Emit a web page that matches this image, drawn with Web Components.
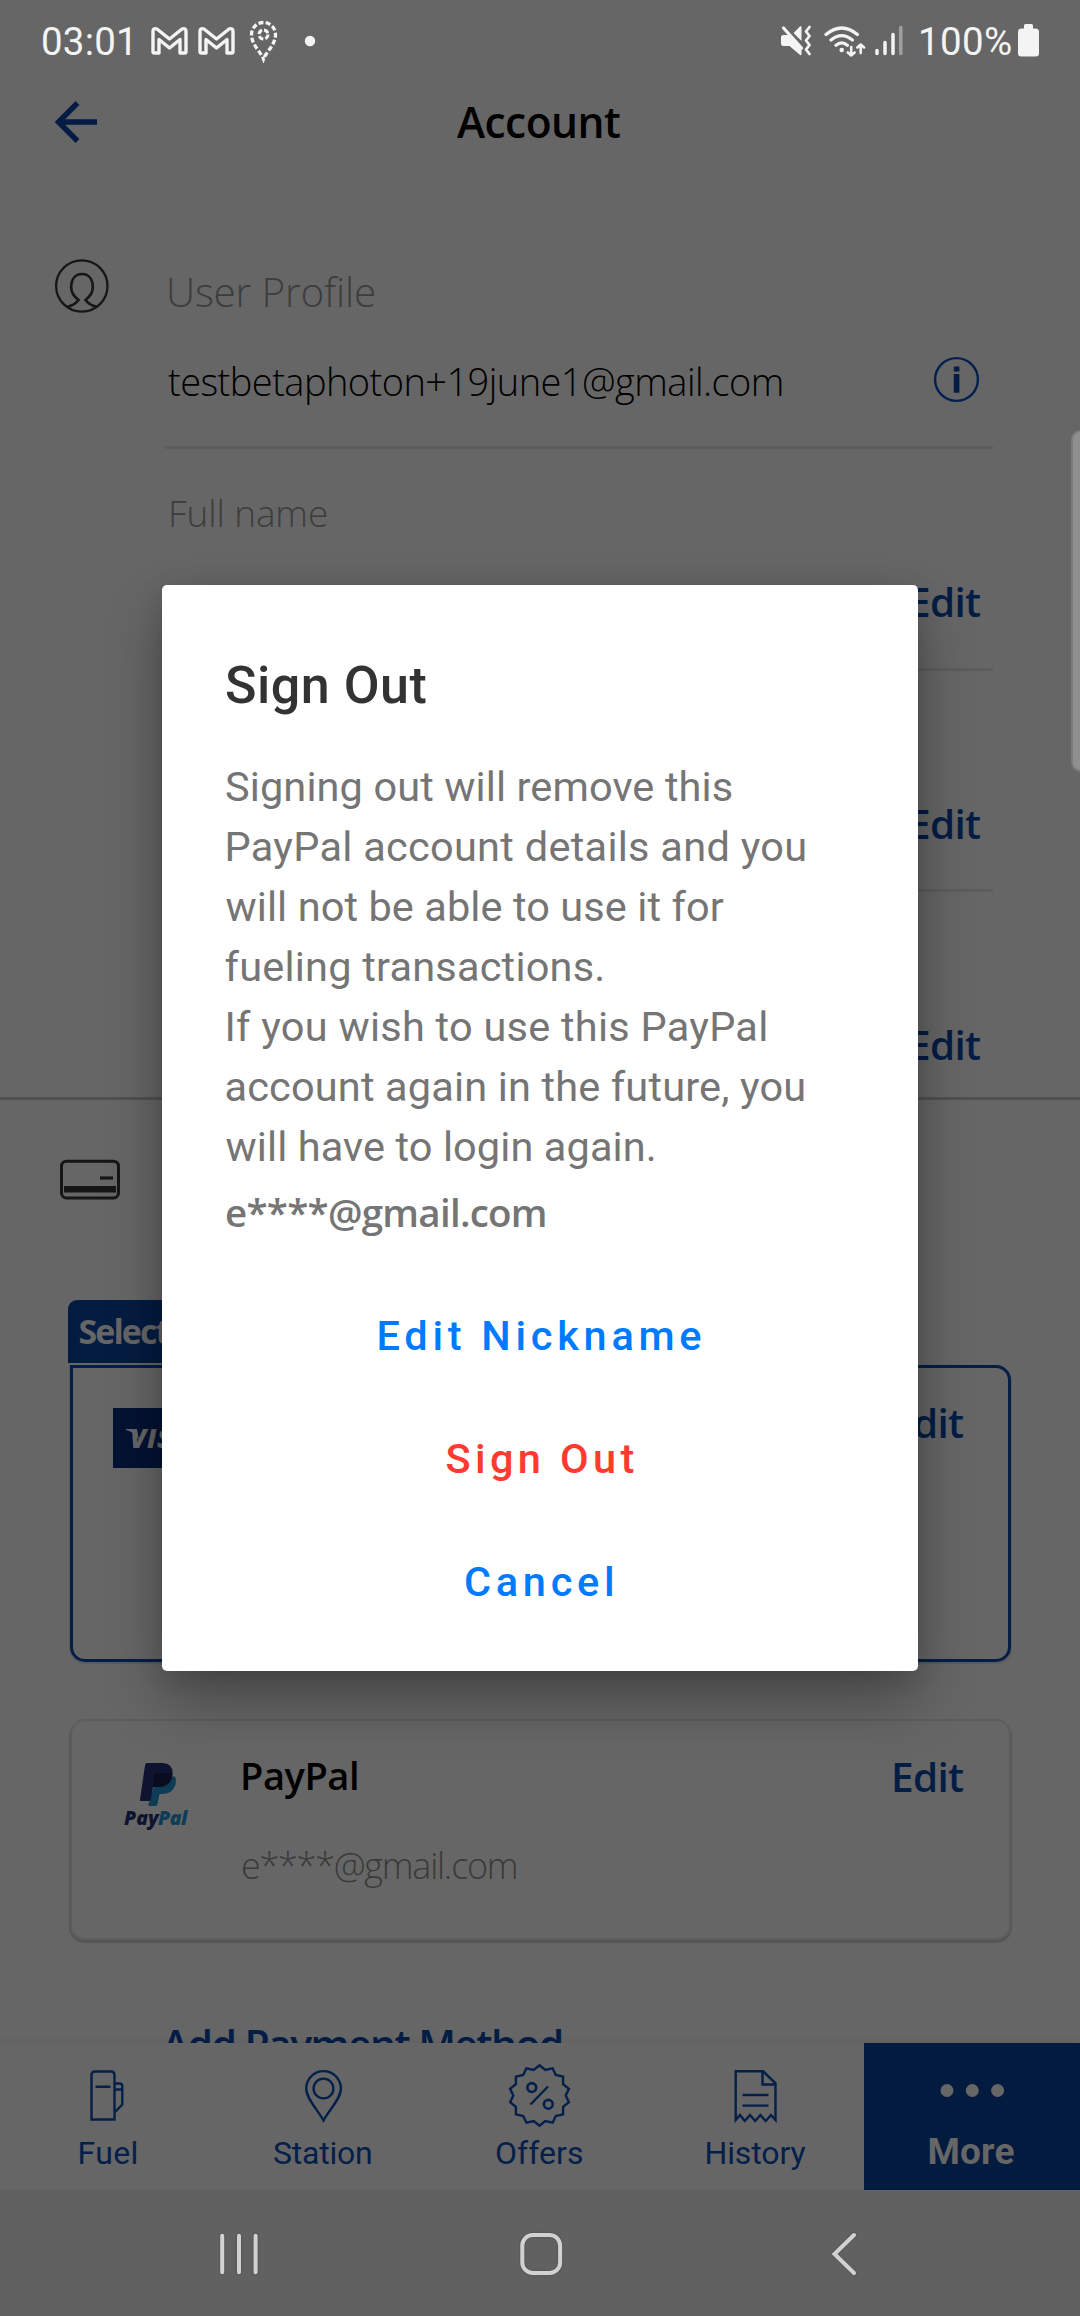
<!DOCTYPE html>
<html lang="en">
<head>
<meta charset="utf-8">
<title>Account</title>
<style>
html,body{margin:0;padding:0;background:#666}
body{width:1080px;height:2316px;overflow:hidden;font-family:Roboto,sans-serif}
</style>
</head>
<body>
<account-screen></account-screen>
<script>
const FACES = { brand: '"Open Sans","Noto Sans",sans-serif', system: 'Roboto,sans-serif' };
const measure = document.createElement('canvas').getContext('2d');

/* A single line of text whose visible glyphs span exactly `ink` pixels. */
class TextRun extends HTMLElement {
  constructor() {
    super();
    this.attachShadow({ mode: 'open' }).innerHTML =
      '<style>:host{display:block;white-space:pre;flex:none;line-height:1.3}span{display:block}</style><span><slot></slot></span>';
  }
  connectedCallback() {
    const face = FACES[this.getAttribute('face') || 'brand'];
    const size = +this.getAttribute('size'), weight = this.getAttribute('weight') || 400;
    const style = this.getAttribute('slant') || 'normal';
    const text = this.textContent;
    Object.assign(this.style, { fontFamily: face, fontSize: size + 'px', fontWeight: weight, fontStyle: style, fontVariantLigatures: 'none' });
    if (this.hasAttribute('color')) this.style.color = this.getAttribute('color');
    const ink = +this.getAttribute('ink');
    if (!ink) return;
    measure.font = `${style} ${weight} ${size}px ${face}`;
    measure.letterSpacing = '0.01px';
    const m = measure.measureText(text);
    const natural = m.actualBoundingBoxLeft + m.actualBoundingBoxRight;
    const gap = (ink - natural) / Math.max(1, text.length - 1);
    this.style.width = ink + 'px';
    this.style.letterSpacing = gap.toFixed(3) + 'px';
    this.shadowRoot.querySelector('span').style.marginLeft = m.actualBoundingBoxLeft.toFixed(2) + 'px';
  }
}
customElements.define('text-run', TextRun);

const badge = (() => {
  const pts = [];
  for (let i = 0; i < 28; i++) {
    const r = i % 2 ? 26.2 : 30.2, a = Math.PI * i / 14 - Math.PI / 2;
    pts.push((539.5 + r * Math.cos(a)).toFixed(1) + ',' + (2095.5 + r * Math.sin(a)).toFixed(1));
  }
  return pts.join(' ');
})();
const GMAIL = '<path d="M154.5 53h4.500V39.500l10.500 8.500 10.500-8.500V53h4.500q1.500 0 1.500-1.500V31.500q0-4-4-2.500l-12.500 10-12.500-10q-4-1.500-4 2.500V51.500q0 1.500 1.500 1.500z" fill="none" stroke="#f4f4f4" stroke-width="3.400" stroke-linejoin="round"/>';
/* name: [viewBox, markup] */
const ICONS = {
  gmail: ['151 22 37 38', GMAIL],
  trip: ['248 20 31 44', '<g fill="none" stroke="#f4f4f4"><path d="M263.500 60C261 53 251.500 46 251.500 35.500A12 12 0 0 1 275.500 35.500C275.500 46 266 53 263.500 60z" stroke-width="3.300" stroke-dasharray="5 2.300" stroke-dashoffset="2.500"/><circle cx="263.500" cy="35.500" r="4.500" stroke-width="3" stroke-dasharray="5 2.070"/></g>'],
  more1: ['304 35 12 12', '<circle cx="310" cy="41" r="5.200" fill="#f4f4f4"/>'],
  mute: ['780 24 32 36', '<g fill="#f4f4f4"><path d="M783 36h5l13.500 13V55.500q-.5 1.500-2 0L789.500 47H783q-2-.5-2-2v-7q0-1.500 2-2z"/><path d="M793.500 34l6.500-6.500q1.500-1 1.500.5V42z"/></g><path d="M786 28.500l18.500 20" stroke="#666" stroke-width="2.500"/><path d="M783.500 29l18 20" stroke="#f4f4f4" stroke-width="3.200" stroke-linecap="round"/><path d="M809.500 28l-3.500 4.500 3.500 4.500-3.500 4.500 3.500 4.500-3.500 4.500 3.500 4.500" fill="none" stroke="#f4f4f4" stroke-width="2.800" stroke-linecap="round" stroke-linejoin="round"/>'],
  wifi: ['822 22 45 38', '<g fill="none" stroke="#f4f4f4" stroke-width="3.200" stroke-linecap="round" stroke-linejoin="round"><path d="M826 34.500q15.700-13 31.400 0M831 40q10.700-8.600 21.400 0M836 45.200q5.700-4.600 11.400 0"/><path d="M851.200 47v8.500M847.800 52.500l3.400 3 3.400-3M860.700 53v-8.500M857.300 47.500l3.400-3 3.400 3" stroke-width="2.600"/></g><circle cx="841.700" cy="50" r="2.300" fill="#f4f4f4"/>'],
  signal: ['874 24 30 36', '<g stroke="#f4f4f4" stroke-width="3.500" stroke-linecap="round"><path d="M877 51.500v3M885 43.500v11M893 35.500v19"/><path d="M900.800 28.500v26" stroke="#a0a0a0"/></g>'],
  battery: ['1017 24 23 36', '<path d="M1024 26.500q0-1.500 1.500-1.500h6q1.500 0 1.500 1.500V29.500h2.500q3.500 0 3.500 3.500V54.500q0 3-3.500 3h-14q-3.500 0-3.500-3V33q0-3.500 3.500-3.500h2.500z" fill="#f4f4f4"/>'],
  back: ['54 98 46 48', '<path d="M97 122H60M77.500 103L58.500 122l19 19" fill="none" stroke="#041c43" stroke-width="5.400"/>'],
  user: ['54 258 56 56', '<g fill="none" stroke="#161616" stroke-width="2.300"><circle cx="81.800" cy="286" r="25.700"/><path d="M67 307q8-2 11.500-7C74 296.500 71.200 292 71.200 287.500 71.200 279.500 75 274 82 274S92.800 279.500 92.800 287.500C92.800 292 90 296.500 85.500 300q3.500 5 11.500 7" stroke-width="2.700"/></g>'],
  info: ['933 356 48 48', '<circle cx="956.500" cy="379.500" r="21.400" fill="none" stroke="#04204f" stroke-width="2.400"/><path d="M953.800 366.500h5.600v5h-5.600zM953.800 374h5.600v18.700h-5.600z" fill="#041d47"/>'],
  card: ['58 1158 64 43', '<rect x="61.500" y="1161.200" width="57" height="36.800" rx="5" fill="none" stroke="#161616" stroke-width="3"/><path d="M64 1189.300h52" stroke="#161616" stroke-width="6.500"/><path d="M100 1178h13" stroke="#161616" stroke-width="3.200"/>'],
  pp: ['138 1761 40 47', '<path d="M157 1776.500h18q1.500 3 .5 8-3 9.500-13.500 9.500h-2.500l-2 10q-.3 2-2.200 2h-5.800q-1.200 0-1-1.500z" fill="#0e3c56"/><path d="M146.500 1763h16q11 .5 10 11.500-2 12.500-14 12.500h-5.500l-2 12q-.5 2-2 2h-8q-1.200 0-1-1.500l5-34q.3-2.500 1.500-2.500z" fill="#0e1430"/><path d="M154.500 1773h17.800q.3 13-13.300 14h-6.500z" fill="#0a0d20"/>'],
  fuel: ['89 2064 38 62', '<g fill="none" stroke="#04204a" stroke-width="2.400"><path d="M91.500 2118.500V2074q0-3.500 3.500-3.500h16q3.500 0 3.500 3.500v44.500zM95.500 2085.700h15M115 2082.500h4.500q2.800 0 2.800 3v18l-7.300 7.500M115 2088.500h7"/></g>'],
  pin: ['302 2064 44 62', '<g fill="none" stroke="#04204a" stroke-width="2.400"><path d="M323.500 2119.500C318 2109 306.200 2098 306.200 2087.500A17.300 17.300 0 0 1 340.900 2087.500C340.900 2098 329 2109 323.500 2119.500z"/><circle cx="323.500" cy="2087.500" r="9.900"/></g>'],
  offers: ['506 2062 68 67', `<g fill="none" stroke="#04204a" stroke-width="2.400"><polygon points="${badge}"/><path d="M530.500 2104.500l17.500-18"/><circle cx="531.800" cy="2087.500" r="4.400" stroke-width="2.600"/><circle cx="548.300" cy="2104.300" r="4.400" stroke-width="2.600"/></g>`],
  history: ['732 2064 48 62', '<g fill="none" stroke="#04204a" stroke-width="2.400"><path d="M735.700 2119V2070.300h27.500l12.300 12V2119l-4.500-5-5.300 6-5.300-6-5.200 6-5.200-6-5.200 6-4.800-6z"/><path d="M762.500 2070.500v13h12.500M742.500 2094h26M742.500 2104.600h26"/></g>'],
  dots: ['938 2082 66 17', '<g fill="#666"><circle cx="946" cy="2090.500" r="6.500"/><circle cx="971.300" cy="2090.500" r="6.500"/><circle cx="996.600" cy="2090.500" r="6.500"/></g>'],
  recents: ['218 2230 42 48', '<g stroke="#5a5a5a" stroke-width="6.500" stroke-linecap="round"><path d="M222.200 2235.800v36.500M239 2235.800v36.500M255.600 2235.800v36.500"/></g><g stroke="#d2d2d2" stroke-width="4" stroke-linecap="round"><path d="M222.200 2235.800v36.500M239 2235.800v36.500M255.600 2235.800v36.500"/></g>'],
  home: ['516 2229 50 50', '<rect x="522.300" y="2235" width="37.800" height="38" rx="10.500" fill="none" stroke="#5a5a5a" stroke-width="6.500"/><rect x="522.300" y="2235" width="37.800" height="38" rx="10.500" fill="none" stroke="#d2d2d2" stroke-width="4"/>'],
  return: ['828 2229 32 50', '<path d="M854 2235l-19.500 19 19.500 19" fill="none" stroke="#5a5a5a" stroke-width="6.500" stroke-linecap="round"/><path d="M854 2235l-19.500 19 19.500 19" fill="none" stroke="#d2d2d2" stroke-width="4" stroke-linecap="round"/>']
};
class AppIcon extends HTMLElement {
  constructor() { super(); this.attachShadow({ mode: 'open' }); }
  connectedCallback() {
    const [box, art] = ICONS[this.getAttribute('name')];
    const [, , w, h] = box.split(' ');
    this.shadowRoot.innerHTML = `<style>:host{display:block;flex:none;width:${w}px;height:${h}px}svg{display:block}</style><svg width="${w}" height="${h}" viewBox="${box}">${art}</svg>`;
  }
}
customElements.define('app-icon', AppIcon);

const define = (name, html) => customElements.define(name, class extends HTMLElement {
  constructor() { super(); this.attachShadow({ mode: 'open' }).innerHTML = html; }
});

define('status-bar', `<style>
:host{display:flex;height:82px;align-items:center;box-sizing:border-box;padding:0 40px 0 43px;color:#f4f4f4}
.l,.r{display:flex;align-items:center}.r{margin-left:auto}
text-run{padding-top:2px}
</style>
<div class="l"><text-run face="system" size="38.500" ink="87">03:01</text-run>
<app-icon name="gmail" style="margin-left:21px"></app-icon><app-icon name="gmail" style="margin-left:10px"></app-icon>
<app-icon name="trip" style="margin-left:13px"></app-icon><app-icon name="more1" style="margin-left:25px"></app-icon></div>
<div class="r"><app-icon name="mute"></app-icon><app-icon name="wifi" style="margin-left:10px"></app-icon><app-icon name="signal" style="margin-left:7px"></app-icon>
<text-run face="system" size="38.500" ink="90" style="margin-left:17px">100%</text-run><app-icon name="battery" style="margin-left:6px"></app-icon></div>`);

define('page-header', `<style>
:host{display:grid;grid-template-columns:100px 1fr 100px;height:80px;align-items:center}
app-icon{margin-left:54px}
::slotted(text-run){justify-self:center}
</style><app-icon name="back"></app-icon><slot></slot>`);

define('edit-link', `<style>:host{display:block;flex:none}</style><text-run size="40.500" weight="600" ink="69" color="#041d45">Edit</text-run>`);

define('profile-field', `<style>
:host{display:flex;flex-direction:column;box-sizing:border-box;height:221px;margin-left:165px;width:828px;border-bottom:3px solid #5d5d5d}
.label{height:128px;display:flex;align-items:center;padding-left:6px}
.value{height:51px;display:flex;align-items:center;justify-content:flex-end;padding-right:13px}
</style><div class="label"><slot></slot></div><div class="value"><edit-link></edit-link></div>`);

define('profile-section', `<style>
:host{display:flex;flex-direction:column;height:938px;box-sizing:border-box;border-bottom:3px solid #515151;padding-top:87px;flex:none}
.head{display:flex;align-items:center;height:87px;padding-left:54px;gap:59px}
.head app-icon{margin-bottom:13px}
.mail{display:flex;align-items:center;justify-content:space-between;height:92px;margin-left:165px;width:828px;box-sizing:border-box;padding:0 12px 0 3px}
.rule{height:3px;margin:18px 0 0 165px;width:828px;background:#5d5d5d}
</style>
<div class="head"><app-icon name="user"></app-icon><text-run size="40.500" weight="300" ink="205" color="#3d3d3d">User Profile</text-run></div>
<div class="mail"><text-run size="38" weight="300" ink="614" color="#000">testbetaphoton+19june1@gmail.com</text-run><app-icon name="info" style="margin-bottom:4px"></app-icon></div>
<div class="rule"></div>
<profile-field style="height:222px"><text-run size="37" weight="300" ink="156" color="#3d3d3d">Full name</text-run></profile-field>
<profile-field></profile-field>
<profile-field style="height:205px;border:0"></profile-field>`);

define('visa-mark', `<style>:host{display:flex;align-items:center;justify-content:center;width:90px;height:60px;background:#041233;box-sizing:border-box}</style>
<svg width="90" height="60" viewBox="113 1408 90 60"><path d="M126 1429h8q3 0 3.500 3l1.500 8q-4-8-13-10z" fill="#666"/><text x="130" y="1448" font-family="Open Sans,sans-serif" font-weight="800" font-style="italic" font-size="26.500" fill="#666" textLength="60">VISA</text></svg>`);

define('paypal-mark', `<style>:host{display:flex;flex-direction:column;width:66px;align-items:flex-start}
app-icon{margin-left:14px}.w{display:flex;height:22px;align-items:center;margin-top:-1px}</style>
<app-icon name="pp"></app-icon>
<div class="w"><text-run slant="italic" size="19.500" weight="800" ink="36">Pay</text-run><text-run slant="italic" size="19.500" weight="800" ink="31" color="#0e3c56" style="margin-left:-2px">Pal</text-run></div>`);

define('payment-card', `<style>
:host{display:flex;flex:none;box-sizing:border-box;margin-left:70px;width:941px;height:221px;border:2px solid #5d5d5d;border-radius:15px;box-shadow:0 2px 1px 1px rgba(0,0,0,.17)}
:host([selected]){height:297px;border:3px solid #041e48;border-top-left-radius:0;box-shadow:0 1px 1px 1px rgba(0,0,0,.1)}
.body{display:flex;flex:1;align-items:flex-start}
</style><div class="body"><slot></slot></div><slot name="action"></slot>`);

define('payment-section', `<style>
:host{display:flex;flex-direction:column}
.head{height:159px;display:flex;align-items:center;padding-left:58px;flex:none}
.tab{margin:41px 0 2px 68px;width:240px;height:63px;flex:none;background:#041c41;border-radius:9px 0 0 0;display:flex;align-items:center;box-sizing:border-box;padding-left:11.500px}
.two{display:flex;flex-direction:column;margin-left:53px}
.two text-run{line-height:52px}
.add{height:210px;flex:none;display:flex;align-items:center;padding-left:162px}
</style>
<div class="head"><app-icon name="card"></app-icon></div>
<div class="tab"><text-run size="34" weight="700" ink="90" color="#666">Select</text-run></div>
<payment-card selected><visa-mark style="margin:40px 0 0 40px"></visa-mark><edit-link slot="action" style="margin:29px 45px 0 0"></edit-link></payment-card>
<payment-card style="margin-top:57px"><paypal-mark style="margin:40px 0 0 52px;color:#0e1430"></paypal-mark>
<div class="two"><text-run size="38" weight="600" ink="114" color="#000" style="margin-top:28px">PayPal</text-run><text-run size="36" weight="300" ink="273" color="#3a3a3a" style="margin-top:39px">e****@gmail.com</text-run></div>
<edit-link slot="action" style="margin:30px 46px 0 0"></edit-link></payment-card>
<div class="add"><text-run size="41" weight="600" ink="400" color="#041d45">Add Payment Method</text-run></div>`);

define('tab-item', `<style>
:host{display:flex;flex-direction:column;align-items:center;width:216px;height:147px;color:#04204a}
:host([active]){background:#041b40;color:#666}
.i{height:105px;display:flex;align-items:center}
.t{height:34px;display:flex;align-items:center;margin-top:-11px}
:host([active]) .i{height:95px}:host([active]) .t{margin-top:-3px}
</style><div class="i"><slot name="icon"></slot></div><div class="t"><slot></slot></div>`);

define('tab-bar', `<style>:host{display:flex;height:147px;flex:none;background:#666;box-shadow:0 -1px 6px rgba(0,0,0,.07);position:relative}</style>
<tab-item><app-icon slot="icon" name="fuel"></app-icon><text-run face="system" size="32" ink="57">Fuel</text-run></tab-item>
<tab-item><app-icon slot="icon" name="pin"></app-icon><text-run face="system" size="32" ink="97" style="margin-right:3px">Station</text-run></tab-item>
<tab-item><app-icon slot="icon" name="offers"></app-icon><text-run face="system" size="32" ink="86" style="margin-right:2px">Offers</text-run></tab-item>
<tab-item><app-icon slot="icon" name="history"></app-icon><text-run face="system" size="32" ink="99">History</text-run></tab-item>
<tab-item active><app-icon slot="icon" name="dots"></app-icon><text-run face="system" size="37" weight="700" ink="85">More</text-run></tab-item>`);

define('system-nav', `<style>:host{display:flex;height:126px;flex:none;align-items:center;background:#616161;position:relative;box-sizing:border-box;padding:2px 220px 0 218px}
app-icon[name=home]{margin-left:256px}app-icon[name=return]{margin-left:auto}</style>
<app-icon name="recents"></app-icon><app-icon name="home"></app-icon><app-icon name="return"></app-icon>`);

define('dialog-action', `<style>:host{display:flex;height:123px;align-items:center;justify-content:center}</style><slot></slot>`);

const lines = [['Signing out will remove this', 506, 0], ['PayPal account details and you', 578, 1.5], ['will not be able to use it for', 498.5, -.5], ['fueling transactions.', 377, -.5], ['If you wish to use this PayPal', 538, 1.5], ['account again in the future, you', 578, .5], ['will have to login again.', 428.5, -.5]];
define('sign-out-dialog', `<style>
:host{position:absolute;left:162px;top:585px;width:756px;height:1086px;box-sizing:border-box;background:#fff;border-radius:5px;padding:61px 64px 0;box-shadow:0 30px 60px rgba(0,0,0,.3),0 4px 24px rgba(0,0,0,.12)}
.title{display:flex;align-items:center;height:80px;margin-bottom:30.500px}
.body text-run{line-height:60px;height:60px}
.mail{display:flex;align-items:center;height:72px;margin-bottom:26px}
.acts{display:flex;flex-direction:column}
</style>
<div class="title"><text-run face="system" size="52" weight="500" ink="199.500" color="#333">Sign Out</text-run></div>
<div class="body">${lines.map(([t, w, x]) => `<text-run face="system" size="41.500" ink="${w}" color="#757575" style="margin-left:${x}px">${t}</text-run>`).join('')}</div>
<div class="mail"><text-run size="38.500" weight="600" ink="319" color="#757575">e****@gmail.com</text-run></div>
<div class="acts">
<dialog-action><text-run face="system" size="41.500" weight="500" ink="321" color="#007aff">Edit Nickname</text-run></dialog-action>
<dialog-action><text-run face="system" size="41.500" weight="500" ink="187" color="#ff3b30">Sign Out</text-run></dialog-action>
<dialog-action><text-run face="system" size="41.500" weight="500" ink="146" color="#007aff" style="margin-right:2px">Cancel</text-run></dialog-action>
</div>`);

define('account-screen', `<style>
:host{display:flex;flex-direction:column;position:relative;width:1080px;height:2316px;background:#666;overflow:hidden}
main{display:flex;flex-direction:column;height:1881px;overflow:hidden;flex:none}
.edge{position:absolute;left:1071px;top:430px;width:20px;height:342px;box-sizing:border-box;border:2px solid #7c7c7c;border-radius:11px;background:#8f8f8f}
</style>
<status-bar></status-bar>
<page-header><text-run size="42.500" weight="600" ink="163" color="#000" style="margin-right:3px">Account</text-run></page-header>
<main><profile-section></profile-section><payment-section></payment-section></main>
<tab-bar></tab-bar>
<system-nav></system-nav>
<sign-out-dialog></sign-out-dialog>
<div class="edge"></div>`);
</script>
</body>
</html>
